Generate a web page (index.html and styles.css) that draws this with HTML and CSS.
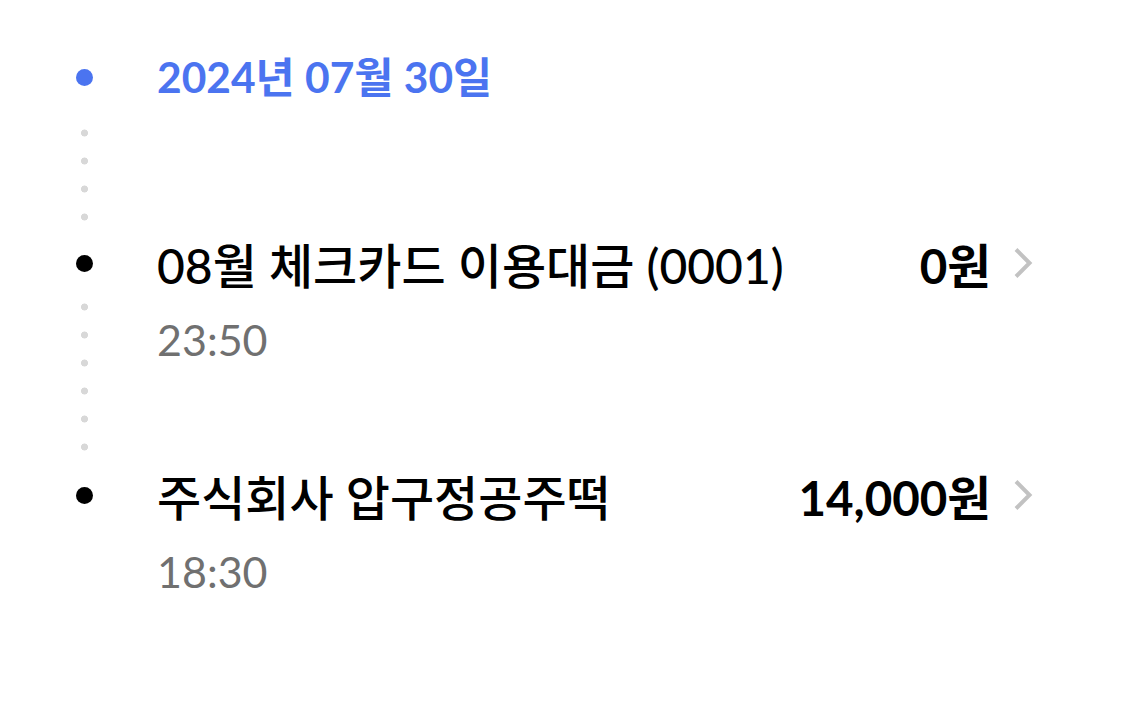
FILE: index.html
```html
<!DOCTYPE html>
<html lang="ko">
<head>
    <meta charset="UTF-8">
    <meta name="viewport" content="width=device-width, initial-scale=1.0">
    <title>이용내역</title>
    <link rel="stylesheet" href="styles.css">
</head>
<body>
    <div class="timeline">
        <div class="day-head">
            <div class="marker">
                <span class="dot dot-blue"></span>
                <span class="trail trail-head"></span>
            </div>
            <div class="day-date">2024년 07월 30일</div>
        </div>

        <div class="entry">
            <div class="marker">
                <span class="dot"></span>
                <span class="trail"></span>
            </div>
            <div class="entry-body">
                <div class="entry-row">
                    <span class="entry-title">08월 체크카드 이용대금 (0001)</span>
                    <span class="entry-amount">0원</span>
                    <svg class="chevron" viewBox="0 0 20 32" width="20" height="32">
                        <path d="M3 2.5 L16.5 16 L3 29.5" fill="none" stroke="#c2c2c2" stroke-width="4"/>
                    </svg>
                </div>
                <div class="entry-time">23:50</div>
            </div>
        </div>

        <div class="entry entry-last">
            <div class="marker">
                <span class="dot"></span>
            </div>
            <div class="entry-body">
                <div class="entry-row">
                    <span class="entry-title">주식회사 압구정공주떡</span>
                    <span class="entry-amount">14,000원</span>
                    <svg class="chevron" viewBox="0 0 20 32" width="20" height="32">
                        <path d="M3 2.5 L16.5 16 L3 29.5" fill="none" stroke="#c2c2c2" stroke-width="4"/>
                    </svg>
                </div>
                <div class="entry-time">18:30</div>
            </div>
        </div>
    </div>
</body>
</html>
```

FILE: styles.css
```css
body {
    margin: 0;
    background-color: #ffffff;
    font-family: "Lato", "Noto Sans CJK KR", sans-serif;
    color: #000000;
}
.timeline {
    padding: 52px 92px 0 76px;
}
.day-head,
.entry {
    display: flex;
}
.marker {
    width: 81px;
    flex: none;
    display: flex;
    flex-direction: column;
}
.dot {
    display: block;
    width: 17px;
    height: 17px;
    border-radius: 50%;
    background-color: #000000;
    margin-top: 17.5px;
}
.dot-blue {
    background-color: #4b74f0;
    margin-top: 16.5px;
}
.trail {
    display: block;
    flex: 1;
    width: 17px;
    margin-top: 21.5px;
    background-image: radial-gradient(circle, #d8d8d8 3.2px, transparent 3.8px);
    background-size: 17px 28px;
    background-repeat: repeat-y;
    background-position: center top;
}
.trail-head {
    margin-top: 33.5px;
}
.day-date {
    flex: 1;
    font-size: 42.5px;
    font-weight: 700;
    line-height: 50px;
    color: #4b74f0;
    padding-bottom: 135px;
}
.entry-body {
    flex: 1;
    padding-bottom: 105px;
}
.entry-last .entry-body {
    padding-bottom: 60px;
}
.entry-row {
    display: flex;
    align-items: center;
    height: 52px;
    padding-bottom: 4px;
}
.entry-title {
    flex: 1;
    font-size: 48px;
    font-weight: 500;
    white-space: nowrap;
}
.entry-amount {
    font-size: 47.5px;
    font-weight: 700;
}
.chevron {
    margin-left: 22px;
    flex: none;
}
.entry-time {
    margin-top: 23px;
    font-size: 43px;
    line-height: 48px;
    color: #707070;
}
```
